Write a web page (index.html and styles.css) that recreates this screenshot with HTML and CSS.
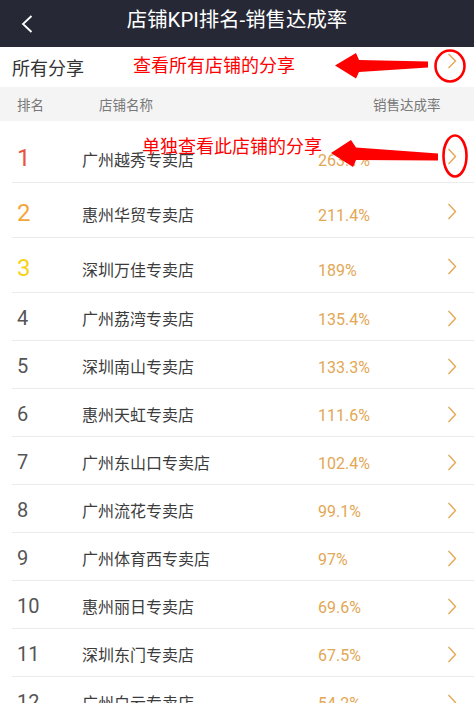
FILE: index.html
```html
<!DOCTYPE html>
<html lang="zh-CN">
<head>
<meta charset="utf-8">
<link rel="stylesheet" href="styles.css">
</head>
<body>
<div class="page">
  <header class="topbar">
    <div class="back">
      <svg width="12" height="18" viewBox="0 0 12 18"><polyline points="10.5,1 2,9 10.5,17" fill="none" stroke="#fff" stroke-width="1.8"/></svg>
    </div>
    <h1 class="title">店铺KPI排名-销售达成率</h1>
    <div></div>
  </header>

  <div class="share-row">
    <span class="share-label">所有分享</span>
    <span class="note note-all">查看所有店铺的分享</span>
    <svg class="chev chev-share" width="10" height="16" viewBox="0 0 10 16"><polyline points="1.5,1 8.5,8 1.5,15" fill="none" stroke="#e3a755" stroke-width="1.4"/></svg>
  </div>

  <div class="col-head">
    <span class="c-rank">排名</span>
    <span class="c-name">店铺名称</span>
    <span class="c-rate">销售达成率</span>
  </div>

  <ul class="list">
    <li class="row top"><span class="rank r1">1</span><span class="name">广州越秀专卖店</span><span class="rate">263.1%</span><svg class="chev" width="10" height="17" viewBox="0 0 10 17"><polyline points="1.5,1 8.5,8.5 1.5,16" fill="none" stroke="#e3a755" stroke-width="1.4"/></svg></li>
    <li class="row top"><span class="rank r2">2</span><span class="name">惠州华贸专卖店</span><span class="rate">211.4%</span><svg class="chev" width="10" height="17" viewBox="0 0 10 17"><polyline points="1.5,1 8.5,8.5 1.5,16" fill="none" stroke="#e3a755" stroke-width="1.4"/></svg></li>
    <li class="row top"><span class="rank r3">3</span><span class="name">深圳万佳专卖店</span><span class="rate">189%</span><svg class="chev" width="10" height="17" viewBox="0 0 10 17"><polyline points="1.5,1 8.5,8.5 1.5,16" fill="none" stroke="#e3a755" stroke-width="1.4"/></svg></li>
    <li class="row"><span class="rank">4</span><span class="name">广州荔湾专卖店</span><span class="rate">135.4%</span><svg class="chev" width="10" height="17" viewBox="0 0 10 17"><polyline points="1.5,1 8.5,8.5 1.5,16" fill="none" stroke="#e3a755" stroke-width="1.4"/></svg></li>
    <li class="row"><span class="rank">5</span><span class="name">深圳南山专卖店</span><span class="rate">133.3%</span><svg class="chev" width="10" height="17" viewBox="0 0 10 17"><polyline points="1.5,1 8.5,8.5 1.5,16" fill="none" stroke="#e3a755" stroke-width="1.4"/></svg></li>
    <li class="row"><span class="rank">6</span><span class="name">惠州天虹专卖店</span><span class="rate">111.6%</span><svg class="chev" width="10" height="17" viewBox="0 0 10 17"><polyline points="1.5,1 8.5,8.5 1.5,16" fill="none" stroke="#e3a755" stroke-width="1.4"/></svg></li>
    <li class="row"><span class="rank">7</span><span class="name">广州东山口专卖店</span><span class="rate">102.4%</span><svg class="chev" width="10" height="17" viewBox="0 0 10 17"><polyline points="1.5,1 8.5,8.5 1.5,16" fill="none" stroke="#e3a755" stroke-width="1.4"/></svg></li>
    <li class="row"><span class="rank">8</span><span class="name">广州流花专卖店</span><span class="rate">99.1%</span><svg class="chev" width="10" height="17" viewBox="0 0 10 17"><polyline points="1.5,1 8.5,8.5 1.5,16" fill="none" stroke="#e3a755" stroke-width="1.4"/></svg></li>
    <li class="row"><span class="rank">9</span><span class="name">广州体育西专卖店</span><span class="rate">97%</span><svg class="chev" width="10" height="17" viewBox="0 0 10 17"><polyline points="1.5,1 8.5,8.5 1.5,16" fill="none" stroke="#e3a755" stroke-width="1.4"/></svg></li>
    <li class="row"><span class="rank">10</span><span class="name">惠州丽日专卖店</span><span class="rate">69.6%</span><svg class="chev" width="10" height="17" viewBox="0 0 10 17"><polyline points="1.5,1 8.5,8.5 1.5,16" fill="none" stroke="#e3a755" stroke-width="1.4"/></svg></li>
    <li class="row"><span class="rank">11</span><span class="name">深圳东门专卖店</span><span class="rate">67.5%</span><svg class="chev" width="10" height="17" viewBox="0 0 10 17"><polyline points="1.5,1 8.5,8.5 1.5,16" fill="none" stroke="#e3a755" stroke-width="1.4"/></svg></li>
    <li class="row"><span class="rank">12</span><span class="name">广州白云专卖店</span><span class="rate">54.2%</span><svg class="chev" width="10" height="17" viewBox="0 0 10 17"><polyline points="1.5,1 8.5,8.5 1.5,16" fill="none" stroke="#e3a755" stroke-width="1.4"/></svg></li>
  </ul>

  <span class="note note-one">单独查看此店铺的分享</span>
  <svg class="marks" width="474" height="703" viewBox="0 0 474 703">
    <polygon points="335,65.5 356,53 359,60 428,61.5 428,67.5 359,72 356,78.5" fill="#ff0000"/>
    <ellipse cx="450" cy="66" rx="14.5" ry="15.5" fill="none" stroke="#ff0000" stroke-width="2.6"/>
    <polygon points="331,153 351,140 356,147.5 438,153.5 438,160.5 356,160 353,167" fill="#ff0000"/>
    <ellipse cx="455" cy="156" rx="11.5" ry="20.5" fill="none" stroke="#ff0000" stroke-width="2.6"/>
  </svg>
</div>
</body>
</html>
```

FILE: styles.css
```css
* { box-sizing: border-box; }
html, body { margin: 0; padding: 0; }
body {
  width: 474px;
  height: 703px;
  overflow: hidden;
  background: #fff;
  font-family: "Roboto", "Noto Sans CJK SC", sans-serif;
  color: #333;
}
.page { position: relative; width: 474px; height: 703px; overflow: hidden; }

.topbar {
  height: 47px;
  background: #262835;
  display: grid;
  grid-template-columns: 1fr auto 1fr;
  align-items: center;
}
.back { padding-left: 21px; display: flex; align-items: center; padding-top: 1px; }
.title {
  margin: 0;
  color: #fff;
  font-size: 20.4px;
  font-weight: 400;
  line-height: 1;
  padding-bottom: 6px;
}

.share-row {
  height: 40px;
  display: flex;
  align-items: center;
  padding: 0 17px 0 12px;
}
.share-label { font-size: 18px; color: #333; width: 121px; padding-bottom: 1px; }
.note { color: #ff0000; font-size: 18px; line-height: 1; }
.note-all { flex: 1; padding-bottom: 2px; }

.col-head {
  height: 34px;
  background: #f4f4f4;
  display: flex;
  align-items: center;
  font-size: 13.5px;
  color: #787878;
  padding-left: 17px;
  padding-bottom: 1px;
}
.c-rank { width: 82px; }
.c-name { width: 274px; }

.list { list-style: none; margin: 0; padding: 7px 0 0 0; }
.row {
  margin-left: 12px;
  height: 48px;
  border-bottom: 1px solid #ebebeb;
  display: flex;
  align-items: baseline;
  padding: 15px 17px 0 5px;
}
.row.top { height: 55px; padding-top: 18px; }
.rank {
  width: 65px;
  font-size: 20px;
  line-height: 1;
  color: #555;
}
.row.top .rank { font-size: 24px; }
.r1 { color: #e9553c; }
.r2 { color: #f5a63b; }
.r3 { color: #f7d31a; }
.name { width: 236px; font-size: 16px; line-height: 1; color: #3c3c3c; }
.rate { flex: 1; font-size: 16px; line-height: 1; color: #e3a755; }
.chev { align-self: center; flex: none; margin-top: -12px; }
.row.top .chev { margin-top: -16px; }

.note-one { position: absolute; left: 142px; top: 138px; }
.marks { position: absolute; left: 0; top: 0; pointer-events: none; }
```
